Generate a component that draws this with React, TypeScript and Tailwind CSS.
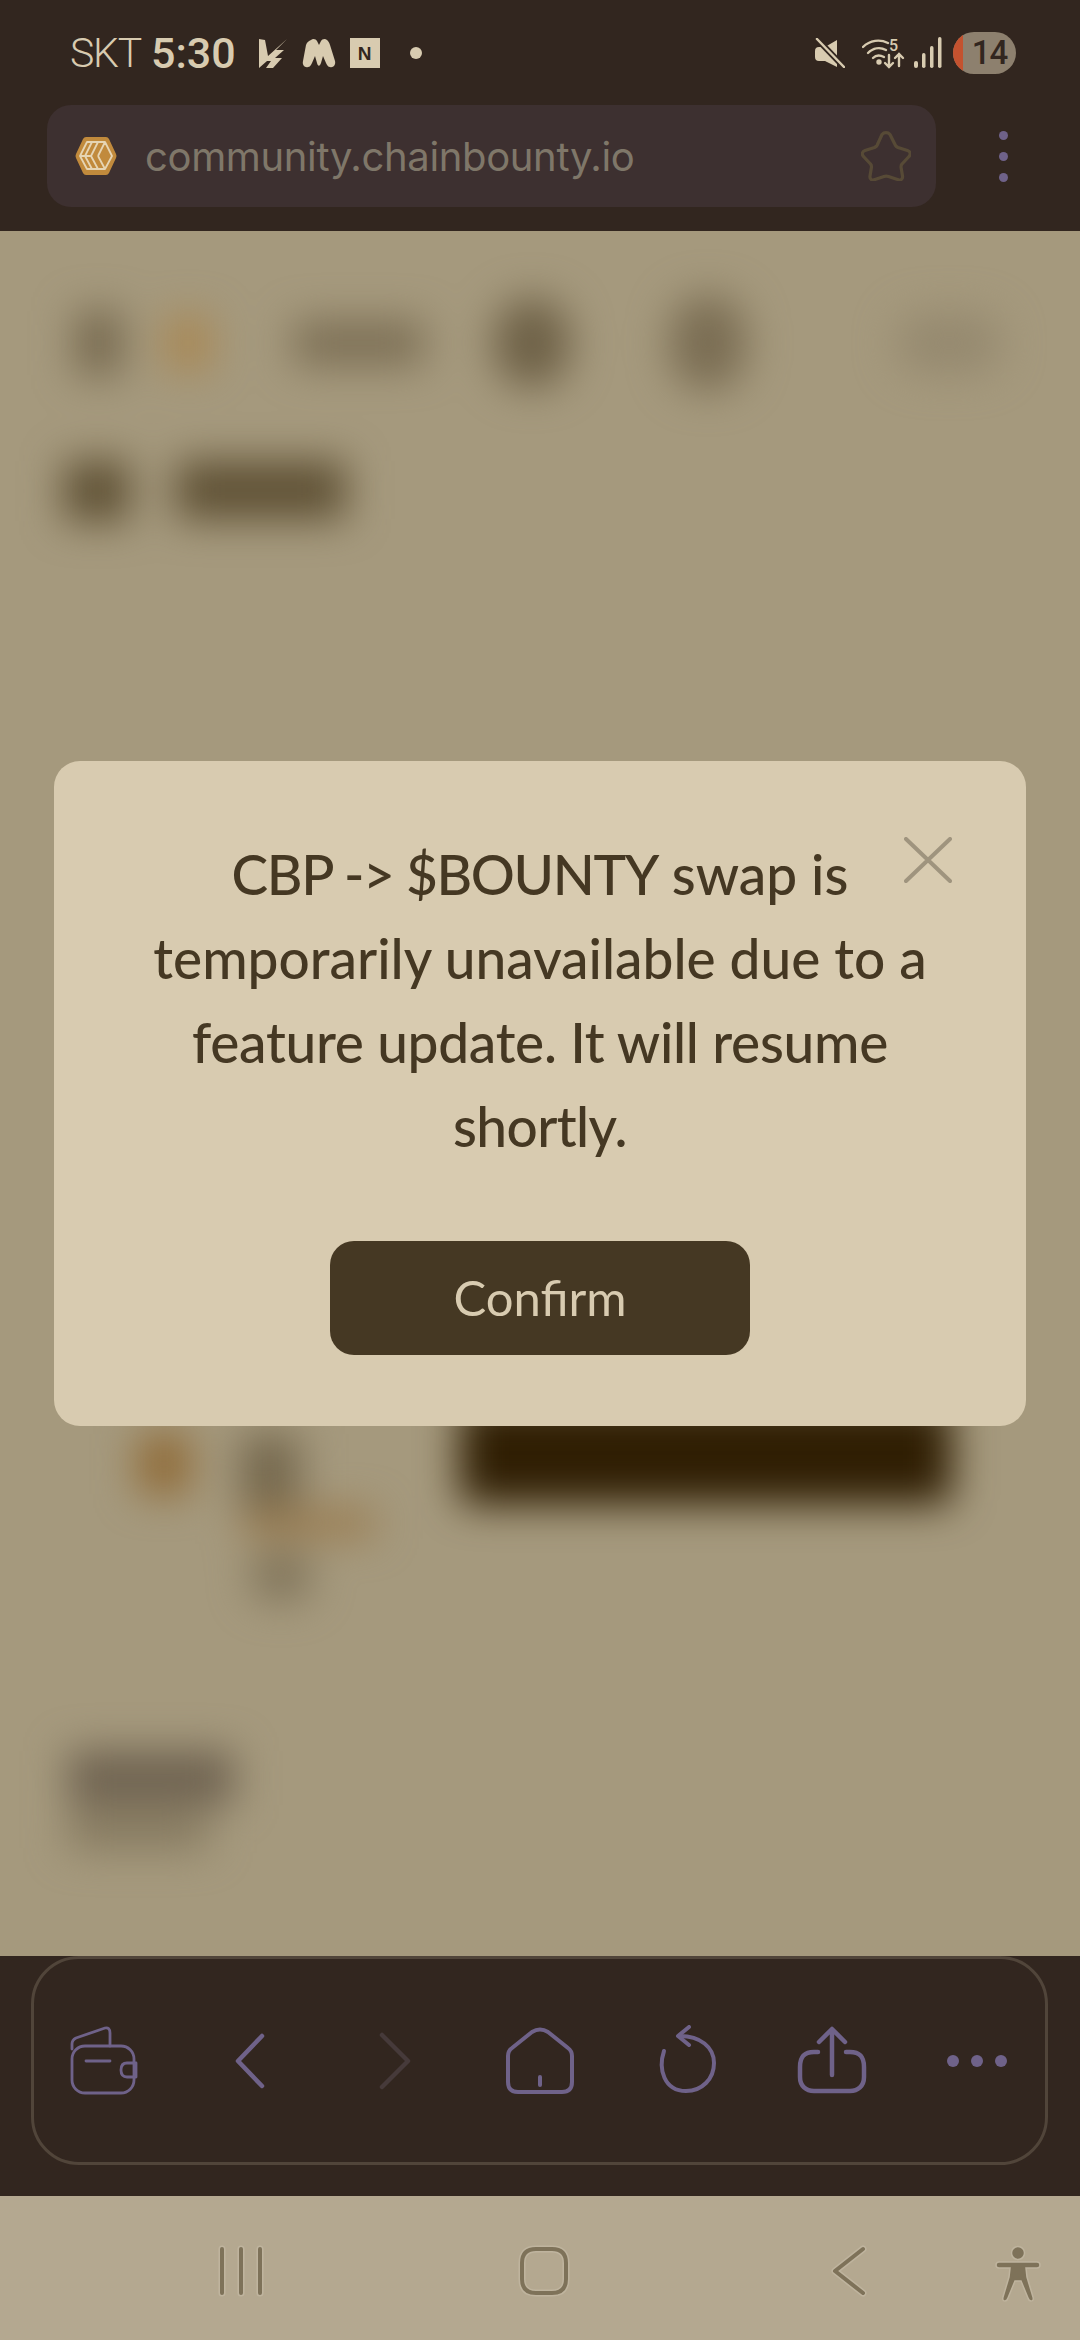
const purple = "#6f6289";

function StatusBar() {
  return (
    <div className="h-[105px] flex items-center pl-[70px] pr-[64px] pt-[1px] text-[#d8cbb0]">
      <span className="font-['Roboto',sans-serif] font-light text-[41px] tracking-[-1.2px] leading-none">SKT</span>
      <span className="ml-[10px] font-['Roboto',sans-serif] font-medium text-[43px] leading-none">5:30</span>
      <svg className="ml-[22px]" width="30" height="30" viewBox="0 0 30 30" fill="#d8cbb0">
        <path d="M1 1l6 1 3 16L29 1 18 12h8l-9 8h7l-9 10H8l5-7H9L1 30z" />
      </svg>
      <svg className="ml-[13px]" width="35" height="30" viewBox="0 0 35 30" fill="#d8cbb0">
        <path d="M10 2c2-2 5-1 6 1l2 4 2-4c1-2 4-3 6-1 1 1 2 2 3 5l5 16c1 4-2 7-5 6-2 0-3-2-4-4l-3-7-2 7c-1 3-3 4-4 0l-2-7-3 7c-1 2-2 4-4 4-3 1-6-2-5-6L5 7c1-3 3-4 5-5z" />
      </svg>
      <div className="ml-[14px] w-[30px] h-[30px] bg-[#d8cbb0] flex items-center justify-center">
        <span className="font-['Liberation_Sans',sans-serif] font-bold text-[19px] leading-none text-[#32261f]">N</span>
      </div>
      <div className="ml-[30px] w-[12px] h-[12px] rounded-full bg-[#d8cbb0]" />
      <div className="flex-1" />
      <svg width="30" height="30" viewBox="0 0 30 30" fill="#d8cbb0">
        <path d="M22 2 10 9H4Q0 9 0 13v6q0 4 4 4h6l12 6z" />
        <path d="M2 1l27 28" stroke="#32261f" strokeWidth="6" />
        <path d="M2 1l27 28" stroke="#d8cbb0" strokeWidth="2.5" strokeLinecap="round" />
      </svg>
      <svg className="ml-[17px]" width="43" height="32" viewBox="0 0 43 32" fill="none" stroke="#d8cbb0" strokeWidth="2.4" strokeLinecap="round">
        <path d="M1 10c7-7 17-8 25-4" />
        <path d="M6 16c5-5 12-6 18-3" />
        <path d="M11 21c3-3 7-3 11-1" />
        <circle cx="17" cy="25" r="1.5" fill="#d8cbb0" />
        <path d="M27 18v12M23 26l4 4 4-4M37 29V17M33 21l4-4 4 4" />
        <text x="27" y="14" fill="#d8cbb0" stroke="none" fontSize="16" fontFamily="Roboto, sans-serif" fontWeight="500">5</text>
      </svg>
      <svg className="ml-[9px]" width="28" height="32" viewBox="0 0 28 32" fill="#d8cbb0">
        <rect x="0" y="24" width="4" height="7" rx="2" />
        <rect x="8" y="16" width="3.5" height="15" rx="1.7" />
        <rect x="16" y="9" width="3.5" height="22" rx="1.7" />
        <rect x="24" y="0" width="3.5" height="31" rx="1.7" />
      </svg>
      <div className="ml-[11px] w-[63px] h-[42px] rounded-[21px] overflow-hidden bg-[#8d806e] flex">
        <div className="w-[10px] bg-[#c4522f]" />
        <span className="flex-1 text-center font-['Roboto',sans-serif] font-medium text-[33px] leading-[42px] tracking-[-1px] text-[#32261f]">14</span>
      </div>
    </div>
  );
}

function AddressBar() {
  return (
    <div className="h-[126px] flex pl-[47px]">
      <div className="w-[889px] h-[102px] rounded-[24px] bg-[#3d3030] flex items-center pl-[28px] pr-[25px]">
        <svg width="42" height="40" viewBox="0 0 42 40">
          <path d="M11 1h20q2 0 3 2l7 15q1 2 0 4l-7 15q-1 2-3 2H11q-2 0-3-2L1 22q-1-2 0-4L8 3q1-2 3-2z" fill="#c18a3c" />
          <path d="M12 6h18l7 14-7 13H12L5 20zM17 6l-7 14 7 13M23 6l-7 14 7 13M30 6l-7 14M5 20h11M23 20l7 13" fill="none" stroke="#e6d5b4" strokeWidth="1.8" strokeLinejoin="round" />
        </svg>
        <span className="ml-[28px] pt-[2px] font-['Inter',sans-serif] text-[40px] leading-none tracking-[-0.35px] text-[#7f7769]">community.chainbounty.io</span>
        <div className="flex-1" />
        <svg width="50" height="50" viewBox="0 0 50 50" fill="none" stroke="#574a36" strokeWidth="3.2" strokeLinejoin="round">
          <path d="M21 3.5c2-2.500 6-2.500 8 0l5.500 11c.5 1 1.500 1.500 2.500 2l9.500 3c3 1 3.500 4 1.500 6l-7 7.500c-1 1-1 2-1 3l1.500 9c.5 3-2 5-5 3.500l-9-3c-1.500-.5-3-.5-4.500 0l-9 3c-3 1.500-5.500-.5-5-3.500l1.500-9c0-1 0-2-1-3l-7-7.500c-2-2-1.500-5 1.500-6l9.500-3c1-.5 2-1 2.500-2z" />
        </svg>
      </div>
      <div className="ml-[63px] h-[102px] flex flex-col items-center justify-center gap-[12px]">
        <div className="w-[9px] h-[9px] rounded-full bg-[#6f6289]" />
        <div className="w-[9px] h-[9px] rounded-full bg-[#6f6289]" />
        <div className="w-[9px] h-[9px] rounded-full bg-[#6f6289]" />
      </div>
    </div>
  );
}

// page behind the dialog, only visible as blurred shapes
function BlurredPage() {
  return (
    <div className="h-full blur-[20px]">
      <div className="pt-[64px] pl-[76px] flex items-center">
        <div className="w-[46px] h-[64px] bg-[#75684e]" />
        <div className="ml-[44px] w-[44px] h-[52px] bg-[#a98650]" />
        <div className="ml-[84px] w-[130px] h-[44px] bg-[#7b6e54]" />
        <div className="ml-[70px] w-[76px] h-[90px] rounded-full bg-[#6e6147]" />
        <div className="ml-[100px] w-[76px] h-[96px] rounded-full bg-[#7a6d53]" />
        <div className="ml-[150px] w-[106px] h-[60px] rounded-full bg-[#95896f]" />
      </div>
      <div className="mt-[70px] pl-[64px] flex">
        <div className="w-[66px] h-[60px] bg-[#5e5034]" />
        <div className="ml-[46px] w-[170px] h-[58px] bg-[#5e5034]" />
      </div>
      <div className="mt-[881px] pl-[138px] flex">
        <div className="mt-[32px] w-[52px] h-[60px] bg-[#8f6a36]" />
        <div className="mt-[32px] ml-[50px] w-[60px] h-[74px] bg-[#75684e]" />
        <div className="ml-[160px] w-[492px] h-[102px] rounded-[10px] bg-[#2f1e03]" />
      </div>
      <div className="mt-[2px] ml-[244px] w-[130px] h-[26px] bg-[#98784a]" />
      <div className="mt-[15px] ml-[250px] w-[62px] h-[50px] rounded-full bg-[#7f7359]" />
      <div className="mt-[150px] pl-[68px]">
        <div className="w-[166px] h-[54px] bg-[#6e6250]" />
        <div className="mt-[8px] w-[140px] h-[36px] bg-[#85795f]" />
      </div>
    </div>
  );
}

function Dialog() {
  return (
    <div className="absolute left-[54px] top-[530px] w-[972px] h-[665px] rounded-[26px] bg-[#d8cbb0] flex flex-col items-center">
      <svg className="absolute left-[850px] top-[76px]" width="48" height="46" viewBox="0 0 48 46" fill="none" stroke="#9f947e" strokeWidth="4" strokeLinecap="round">
        <path d="M2 2l44 42M46 2 2 44" />
      </svg>
      <div className="mt-[71px] font-['Lato',sans-serif] font-medium text-[55px] leading-[84px] text-center text-[#453823]">
        <p><span className="tracking-[-1.4px]">CBP -&gt; $BOUNTY</span> swap is</p>
        <p>temporarily unavailable due to a</p>
        <p className="tracking-[-0.3px]">feature update. It will resume</p>
        <p className="tracking-[-0.6px]">shortly.</p>
      </div>
      <button className="mt-[73px] w-[420px] h-[114px] rounded-[24px] bg-[#453823] font-['Lato',sans-serif] text-[49px] text-[#d8cbb0]">Confirm</button>
    </div>
  );
}

function ToolIcon({ children }: { children: React.ReactNode }) {
  return (
    <div className="flex items-center justify-center">
      <svg width="72" height="72" viewBox="0 0 72 72" fill="none" stroke={purple} strokeWidth="3.5" strokeLinecap="round" strokeLinejoin="round">
        {children}
      </svg>
    </div>
  );
}

function Toolbar() {
  return (
    <div className="h-[240px] pl-[31px] pr-[32px]">
      <div className="h-[209px] border-[3px] border-[#51453a] rounded-[48px] overflow-hidden">
        <div className="h-full grid grid-cols-[141px_repeat(6,146px)] items-center">
          <ToolIcon>
            <path d="M3 24v-5q0-4 4-6L36 3q5-1 5 5v13" strokeWidth="2.8" />
            <rect x="3" y="21" width="62" height="47" rx="13" strokeWidth="2.8" />
            <path d="M17 36h24" strokeWidth="2.8" />
            <path d="M67 38H58q-6 0-6 7t6 7h9z" strokeWidth="2.8" />
          </ToolIcon>
          <ToolIcon>
            <path d="M50 11 26 36l24 25" strokeWidth="4.5" />
          </ToolIcon>
          <ToolIcon>
            <path d="M24 10l26 26-26 26" stroke="#463a3a" strokeWidth="4.5" />
          </ToolIcon>
          <ToolIcon>
            <path d="M28 7 8 23q-4 3-4 8v26q0 10 10 10h44q10 0 10-10V31q0-5-4-8L44 7q-8-5-16 0z" strokeWidth="4" />
            <path d="M36 52v8" strokeWidth="4" />
          </ToolIcon>
          <ToolIcon>
            <path d="M14 26C8 44 14 66 36 66c16 0 28-12 28-28S50 11 30 11" strokeWidth="4" />
            <path d="M39 2 28 11l11 9" strokeWidth="4" />
          </ToolIcon>
          <ToolIcon>
            <path d="M36 50V6M23 17 36 4l13 13" strokeWidth="4.5" />
            <path d="M22 27H18C8 27 4 32 4 42v10c0 9 6 14 14 14h36c8 0 14-5 14-14V42c0-10-4-15-14-15h-4" strokeWidth="4.5" />
          </ToolIcon>
          <div className="flex items-center justify-center gap-[12px] pr-[2px]">
            <div className="w-[12px] h-[12px] rounded-full bg-[#6f6289]" />
            <div className="w-[12px] h-[12px] rounded-full bg-[#6f6289]" />
            <div className="w-[12px] h-[12px] rounded-full bg-[#6f6289]" />
          </div>
        </div>
      </div>
    </div>
  );
}

function NavIcon({ w, d, className }: { w: number; d: string; className?: string }) {
  return (
    <svg className={className} width={w} height="56" viewBox={`0 0 ${w} 56`} fill="none" strokeLinecap="round" strokeLinejoin="round">
      <path d={d} stroke="#bfb49e" strokeWidth="7" />
      <path d={d} stroke="#7e7259" strokeWidth="4" />
    </svg>
  );
}

function NavBar() {
  return (
    <div className="h-[144px] bg-[#b4a890] flex items-center pt-[6px]">
      <NavIcon className="ml-[214px]" w={54} d="M8 6v44M27 6v44M46 6v44" />
      <NavIcon className="ml-[248px]" w={56} d="M20 6h16q14 0 14 14v16q0 14-14 14H20Q6 50 6 36V20Q6 6 20 6z" />
      <NavIcon className="ml-[257px]" w={40} d="M34 6 6 28l28 22" />
      <svg className="ml-[126px] mt-[6px]" width="46" height="58" viewBox="0 0 46 58">
        <g fill="#7e7259" stroke="#bfb49e" strokeWidth="1.5">
          <circle cx="23" cy="8" r="6.500" />
          <path d="M4 17h38q3 0 3 3t-3 3H31l1 9 6 20q1 4-2 4-2 0-3-3l-7-17h-6l-7 17q-1 3-3 3-3 0-2-4l6-20 1-9H4q-3 0-3-3t3-3z" />
        </g>
      </svg>
    </div>
  );
}

export default function App() {
  return (
    <div className="w-[1080px] h-[2340px] flex flex-col bg-[#32261f] overflow-hidden">
      <StatusBar />
      <AddressBar />
      <div className="relative flex-1 bg-[#a5997d] overflow-hidden">
        <BlurredPage />
        <Dialog />
      </div>
      <Toolbar />
      <NavBar />
    </div>
  );
}
